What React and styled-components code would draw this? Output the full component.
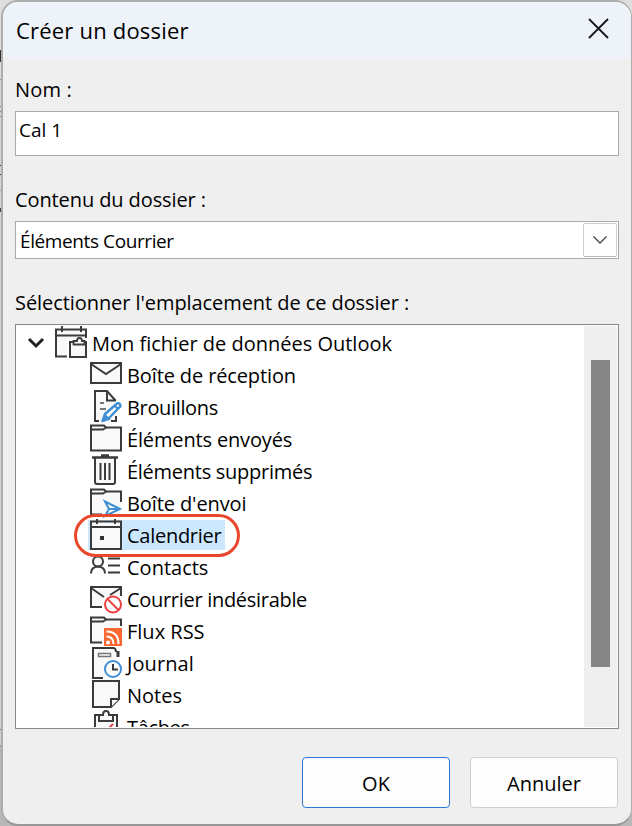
import React from "react";
import styled, { createGlobalStyle } from "styled-components";

const GlobalStyle = createGlobalStyle`
  * {
    box-sizing: border-box;
  }
  body {
    margin: 0;
    color: #000;
    font-family: "Open Sans", "Noto Sans", sans-serif;
    font-size: 20px;
  }
`;

// What shows of the window behind the dialog, along its edges
const Backdrop = styled.div`
  height: 826px;
  padding-left: 1px;
  background: linear-gradient(
    #dedede 0 50px,
    #333 50px 62px,
    #dedede 62px 79px,
    #999 79px 80px,
    #d6d6d6 80px 106px,
    #888 106px 107px,
    #d6d6d6 107px 111px,
    #888 111px 112px,
    #d6d6d6 112px 116px,
    #888 116px 117px,
    #d6d6d6 117px 165px,
    #333 165px 166px,
    #d6d6d6 166px 174px,
    #333 174px 175px,
    #d6d6d6 175px 190px,
    #999 190px 191px,
    #d6d6d6 191px 208px,
    #444 208px 212px,
    #d4d4d4 212px 729px,
    #777 729px 730px,
    #cfcfcf 730px 745px,
    #999 745px 747px,
    #b8b8b8 747px 826px
  );
`;

const Dialog = styled.div`
  display: flex;
  flex-direction: column;
  width: 631px;
  height: 826px;
  background: #efefef;
  border: 2px solid #adadad;
  border-right-width: 1px;
  border-bottom-color: #979797;
  border-radius: 17px;
  overflow: hidden;
`;

const TitleBar = styled.header`
  display: flex;
  align-items: center;
  justify-content: space-between;
  flex: none;
  height: 56px;
  padding: 0 22px 0 13px;
  background: #edf3f8;
`;

const Text = styled.span`
  display: block;
  flex: none;
  line-height: 32px;
  white-space: nowrap;
  font-size: ${(p) => p.$size || 20}px;
  letter-spacing: ${(p) => p.$spacing || 0}px;
`;

const CloseIcon = styled.svg`
  width: 21px;
  height: 21px;
  margin-bottom: 3px;
  stroke: #15181b;
  stroke-width: 1.8;
`;

const Body = styled.main`
  display: flex;
  flex-direction: column;
  flex: 1;
  padding: 16px 12px 16px;
`;

const Label = styled(Text)`
  height: 37px;
`;

const Input = styled.div`
  flex: none;
  height: 45px;
  margin-bottom: 28px;
  padding: 2px 3px;
  background: #fff;
  border: 1px solid #a9a9ad;
`;

const Select = styled.div`
  display: flex;
  flex: none;
  justify-content: space-between;
  height: 38px;
  margin-bottom: 28px;
  padding: 1px 1px 1px 4px;
  background: #fff;
  border: 1px solid #a9a9ad;

  & > span {
    padding-top: 2px;
  }
`;

const SelectButton = styled.div`
  display: flex;
  align-items: center;
  justify-content: center;
  width: 34px;
  height: 34px;
  background: #fdfdfd;
  border: 1px solid #cfcfcf;
  border-bottom-color: #b9b9b9;
  border-radius: 2px;
`;

const Tree = styled.div`
  display: flex;
  flex: none;
  justify-content: space-between;
  height: 405px;
  padding: 1px;
  background: #fff;
  border: 1px solid #828790;
`;

const Rows = styled.div`
  position: relative;
  flex: 1;
  height: 401px;
  padding-top: 1px;
  overflow: hidden;
`;

const Row = styled.div`
  display: flex;
  height: 32px;
  padding-left: ${(p) => (p.$root ? 10 : 73)}px;
`;

const Item = styled.div`
  display: flex;
  gap: 5px;
  height: 30px;
  margin-top: 1px;
  padding: 0 4px 0 0;
  box-shadow: ${(p) => (p.$selected ? "-2px 0 0 #cce8ff" : "none")};
  background: ${(p) => (p.$selected ? "#cce8ff" : "transparent")};

  & > svg {
    margin-top: -1px;
  }
`;

const Chevron = styled.svg`
  width: 18px;
  height: 32px;
  margin-right: 10px;
  fill: none;
  stroke: #222;
  stroke-width: 3;
`;

const Icon = styled.svg`
  flex: none;
  width: 32px;
  height: 32px;
  overflow: visible;
  fill: #f9f9f9;
  stroke: #3b3b3b;
  stroke-width: 2;
`;

const Annotation = styled.div`
  position: absolute;
  top: 188px;
  left: 57px;
  width: 166px;
  height: 43px;
  border: 3px solid #e8472b;
  border-radius: 22px;
`;

const ScrollBar = styled.div`
  width: 33px;
  height: 401px;
  padding: 34px 7px 0;
  background: #efefef;
`;

const Thumb = styled.div`
  height: 307px;
  background: #868686;
`;

const Footer = styled.footer`
  display: flex;
  flex: none;
  gap: 20px;
  justify-content: flex-end;
  margin-top: 28px;
  padding-right: 1px;
`;

const Button = styled.button`
  display: flex;
  align-items: center;
  justify-content: center;
  width: 148px;
  height: 51px;
  padding: 2px 0 0;
  background: #fdfdfd;
  border: 1px solid ${(p) => (p.$primary ? "#2c78cf" : "#cfcfcf")};
  border-radius: 4px;
  font-family: inherit;
  color: #000;
`;

const folder = "M1 2.5h13l2 2h15v23H1z";
const tab = "M1 6.5h12l3-2";

const icons = {
  root: (
    <>
      <path d="M31 11V2.500H1V29.500h11V14h19V2.500H1" stroke="none" />
      <path d="M12 29.500H1V2.500h30V11" fill="none" />
      <path d="M1 8.500h30M7 -1v6M26 -1v6" fill="none" />
      <path d="M13 12h19v19H13z" fill="#fff" stroke="none" />
      <path d="M15 15h16v15H15z" />
      <path d="M18.500 17.500V14h3.500q0-3 2.500-3t2.500 3h2.500v3.500z" strokeWidth="1.8" />
    </>
  ),
  inbox: (
    <>
      <path d="M1 4h30v20H1z" />
      <path d="M1 5l15 10L31 5" />
    </>
  ),
  draft: (
    <>
      <path d="M5 0h12l9 9v21H5z" stroke="none" />
      <path d="M9 30H5V0h12l8.500 9.500M17 0v9.500h9M21 30h5v-5" fill="none" />
      <path d="M10 12h4M10 18h6" stroke="#777" />
      <path d="M13 29l2-6L27 12.500q3-1 3.500 2.500L19 27z" stroke="#3f8fd4" strokeWidth="2.500" fill="#fff" />
      <path d="M13 30l2-6 4 4zM24 14l4 4" fill="#3f8fd4" stroke="#3f8fd4" />
    </>
  ),
  folder: (
    <>
      <path d={folder} />
      <path d={tab} />
    </>
  ),
  trash: (
    <>
      <path d="M5 3v24q0 2 2 2h16q2 0 2-2V3" />
      <path d="M2 2.500h26M11 .5h8" strokeWidth="2.5" />
      <path d="M10.500 8v17M15 8v17M19.500 8v17" />
    </>
  ),
  outbox: (
    <>
      <path d={folder} stroke="none" />
      <path d="M12 27.500H1v-25h13l2 2h15V15" />
      <path d={tab} />
      <path d="M15 14.500l15 7.500-15 7 4-7zM19 22h11" fill="#fff" stroke="#3f8fd4" />
    </>
  ),
  calendar: (
    <>
      <path d="M1 2.500h30V30H1z" />
      <path d="M1 8h30M7 0v5M25 0v5" />
      <path d="M10 17h4v4h-4z" fill="#333" stroke="none" />
    </>
  ),
  contacts: (
    <>
      <circle cx="8" cy="10.500" r="5" />
      <path d="M1 22.500q0-6.500 7-7 7 .5 7 7" fill="none" />
      <path d="M18 7.500h12M18 14.500h12M18 21.500h12" />
    </>
  ),
  junk: (
    <>
      <path d="M12 24H1V4h30v9" />
      <path d="M1 5l13 9M31 5l-11 7" />
      <circle cx="23" cy="21.500" r="8" fill="#fff" stroke="#ea3e40" />
      <path d="M17.500 16l11 11" stroke="#ea3e40" />
    </>
  ),
  rss: (
    <>
      <path d={folder} stroke="none" />
      <path d="M12 27.500H1v-25h13l2 2h15V11" />
      <path d={tab} />
      <path d="M14 13h18v18H14z" fill="#fb6730" stroke="none" />
      <path d="M16.500 21.500q7 0 7 7.500M16.500 16.500q12 0 12 12.500" stroke="#fff" fill="none" />
      <circle cx="18" cy="27.500" r="2" fill="#fff" stroke="none" />
    </>
  ),
  journal: (
    <>
      <path d="M13 31H3V1h20l4 4v8" stroke="none" />
      <path d="M13 31H3V1h20q3 0 3 4" fill="none" />
      <path d="M8.500 6.500h12v3h-12z" stroke="#777" strokeWidth="1.500" />
      <path d="M28 4v6" strokeWidth="3" />
      <circle cx="23" cy="22" r="8" fill="#fff" stroke="#3f8fd4" />
      <path d="M23 17v5.500h5" fill="none" />
    </>
  ),
  note: (
    <>
      <path d="M3 2h26v18l-8 8H3z" />
      <path d="M21 28v-8h8" />
    </>
  ),
  task: (
    <>
      <path d="M5 4h22v28H5z" />
      <path d="M9 10V4h4q0-4 3-4t3 4h4v6z" />
      <path d="M15 21l8-8" stroke="#ea3e40" />
    </>
  ),
};

const items = [
  { icon: "inbox", name: "Boîte de réception", spacing: -0.12 },
  { icon: "draft", name: "Brouillons", spacing: -0.35 },
  { icon: "folder", name: "Éléments envoyés", spacing: -0.15 },
  { icon: "trash", name: "Éléments supprimés", spacing: -0.27 },
  { icon: "outbox", name: "Boîte d'envoi", spacing: -0.1 },
  { icon: "calendar", name: "Calendrier", spacing: -0.27, selected: true },
  { icon: "contacts", name: "Contacts" },
  { icon: "junk", name: "Courrier indésirable", spacing: -0.3 },
  { icon: "rss", name: "Flux RSS" },
  { icon: "journal", name: "Journal", spacing: 0.1 },
  { icon: "note", name: "Notes" },
  { icon: "task", name: "Tâches", spacing: -0.35 },
];

function App() {
  return (
    <>
      <GlobalStyle />
      <Backdrop>
        <Dialog>
          <TitleBar>
            <Text $size={22} $spacing={0.2}>
              Créer un dossier
            </Text>
            <CloseIcon viewBox="0 0 21 21">
              <path d="M1 1l19 19M20 1L1 20" />
            </CloseIcon>
          </TitleBar>
          <Body>
            <Label $spacing={0.2}>Nom :</Label>
            <Input>
              <Text $size={19}>Cal 1</Text>
            </Input>
            <Label $spacing={-0.1}>Contenu du dossier :</Label>
            <Select>
              <Text $size={19} $spacing={-0.4}>
                Éléments Courrier
              </Text>
              <SelectButton>
                <svg width="14" height="8" fill="none" stroke="#444" strokeWidth="1.3">
                  <path d="M.5 .5L7 7l6.500-6.500" />
                </svg>
              </SelectButton>
            </Select>
            <Label $spacing={-0.07}>Sélectionner l'emplacement de ce dossier :</Label>
            <Tree>
              <Rows>
                <Row $root>
                  <Chevron viewBox="0 0 18 32">
                    <path d="M2 12l7 7 7-7" />
                  </Chevron>
                  <Item>
                    <Icon>{icons.root}</Icon>
                    <Text>Mon fichier de données Outlook</Text>
                  </Item>
                </Row>
                {items.map((item) => (
                  <Row key={item.name}>
                    <Item $selected={item.selected}>
                      <Icon>{icons[item.icon]}</Icon>
                      <Text $spacing={item.spacing}>{item.name}</Text>
                    </Item>
                  </Row>
                ))}
                <Annotation />
              </Rows>
              <ScrollBar>
                <Thumb />
              </ScrollBar>
            </Tree>
            <Footer>
              <Button $primary>
                <Text>OK</Text>
              </Button>
              <Button>
                <Text>Annuler</Text>
              </Button>
            </Footer>
          </Body>
        </Dialog>
      </Backdrop>
    </>
  );
}

export default App;
